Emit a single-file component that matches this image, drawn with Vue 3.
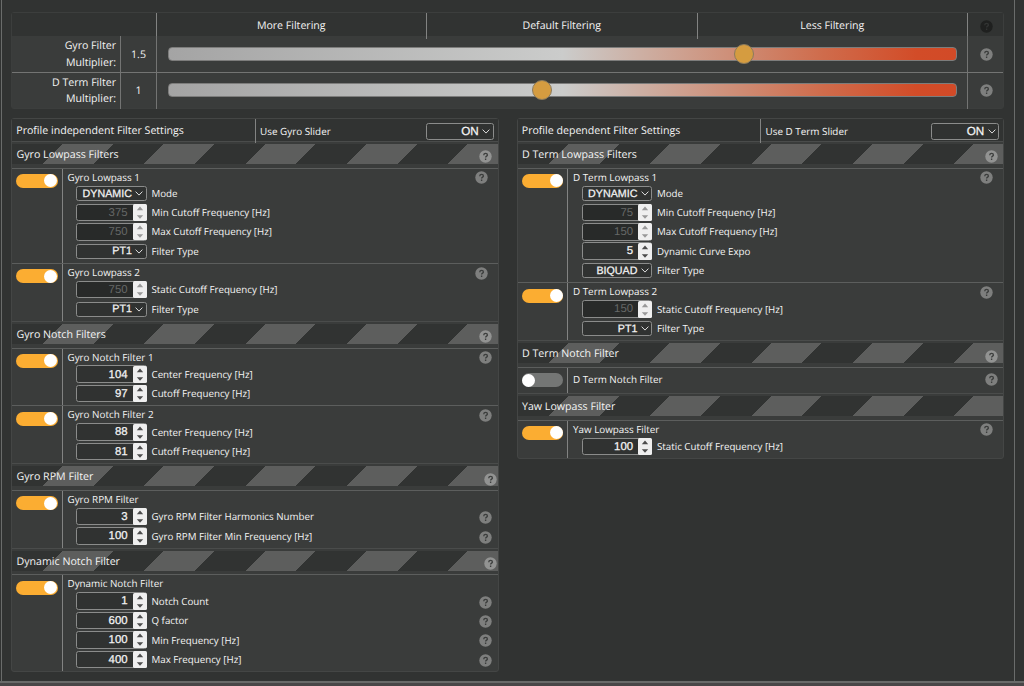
<script setup>
import { h } from 'vue'

const HelpIcon = () =>
  h('svg', { viewBox: '0 0 13 13', class: 'help' }, [
    h('circle', { cx: 6.5, cy: 6.5, r: 6.2, fill: 'currentColor' }),
    h('path', {
      d: 'M4.7 5.2C4.8 3.9 5.6 3.4 6.6 3.4C7.7 3.4 8.4 4 8.4 4.9C8.4 6.1 6.6 6.1 6.6 7.5M6.6 8.6V9.9',
      fill: 'none',
      stroke: '#343635',
      'stroke-opacity': 0.9,
      'stroke-width': 1.35
    })
  ])

const sliders = [
  { label: ['Gyro Filter', 'Multiplier:'], value: '1.5', pos: 73.1 },
  { label: ['D Term Filter', 'Multiplier:'], value: '1', pos: 47.4 }
]

const sel = (value, label, tight = false) => ({ kind: 'select', value, label, tight })
const num = (value, label, opts = {}) => ({ kind: 'number', value, label, ...opts })

const columns = [
  {
    title: 'Profile independent Filter Settings',
    toggle: 'Use Gyro Slider',
    sections: [
      {
        title: 'Gyro Lowpass Filters', help: 'mid',
        groups: [
          { title: 'Gyro Lowpass 1', on: true, help: 'in', rows: [
            sel('DYNAMIC', 'Mode', true),
            num(375, 'Min Cutoff Frequency [Hz]', { off: true }),
            num(750, 'Max Cutoff Frequency [Hz]', { off: true }),
            sel('PT1', 'Filter Type')
          ] },
          { title: 'Gyro Lowpass 2', on: true, help: 'in', rows: [
            num(750, 'Static Cutoff Frequency [Hz]', { off: true }),
            sel('PT1', 'Filter Type')
          ] }
        ]
      },
      {
        title: 'Gyro Notch Filters', help: 'mid',
        groups: [
          { title: 'Gyro Notch Filter 1', on: true, help: 'mid', rows: [
            num(104, 'Center Frequency [Hz]'), num(97, 'Cutoff Frequency [Hz]')
          ] },
          { title: 'Gyro Notch Filter 2', on: true, help: 'mid', rows: [
            num(88, 'Center Frequency [Hz]'), num(81, 'Cutoff Frequency [Hz]')
          ] }
        ]
      },
      {
        title: 'Gyro RPM Filter', help: 'out',
        groups: [
          { title: 'Gyro RPM Filter', on: true, rows: [
            num(3, 'Gyro RPM Filter Harmonics Number', { help: true }),
            num(100, 'Gyro RPM Filter Min Frequency [Hz]', { help: true })
          ] }
        ]
      },
      {
        title: 'Dynamic Notch Filter', help: 'out',
        groups: [
          { title: 'Dynamic Notch Filter', on: true, rows: [
            num(1, 'Notch Count', { help: true }),
            num(600, 'Q factor', { help: true }),
            num(100, 'Min Frequency [Hz]', { help: true }),
            num(400, 'Max Frequency [Hz]', { help: true })
          ] }
        ]
      }
    ]
  },
  {
    title: 'Profile dependent Filter Settings',
    toggle: 'Use D Term Slider',
    sections: [
      {
        title: 'D Term Lowpass Filters', help: 'mid',
        groups: [
          { title: 'D Term Lowpass 1', on: true, help: 'in', rows: [
            sel('DYNAMIC', 'Mode', true),
            num(75, 'Min Cutoff Frequency [Hz]', { off: true }),
            num(150, 'Max Cutoff Frequency [Hz]', { off: true }),
            num(5, 'Dynamic Curve Expo'),
            sel('BIQUAD', 'Filter Type')
          ] },
          { title: 'D Term Lowpass 2', on: true, help: 'in', rows: [
            num(150, 'Static Cutoff Frequency [Hz]', { off: true }),
            sel('PT1', 'Filter Type')
          ] }
        ]
      },
      {
        title: 'D Term Notch Filter', help: 'mid',
        groups: [{ title: 'D Term Notch Filter', on: false, help: 'mid', rows: [] }]
      },
      {
        title: 'Yaw Lowpass Filter',
        groups: [
          { title: 'Yaw Lowpass Filter', on: true, help: 'in', rows: [
            num(100, 'Static Cutoff Frequency [Hz]')
          ] }
        ]
      }
    ]
  }
]
</script>

<template>
  <div class="page">
    <div class="frame">
      <section class="sliders">
        <div class="scale">
          <div class="blank"></div>
          <div>More Filtering</div>
          <div>Default Filtering</div>
          <div>Less Filtering</div>
          <div class="scale-help"><HelpIcon /></div>
        </div>
        <div v-for="s in sliders" :key="s.value" class="slider-row">
          <div class="slider-label"><span v-for="l in s.label" :key="l">{{ l }}</span></div>
          <div class="slider-value">{{ s.value }}</div>
          <div class="slider-cell">
            <div class="track"><i class="thumb" :style="{ left: s.pos + '%' }"></i></div>
          </div>
          <div class="slider-help"><HelpIcon /></div>
        </div>
      </section>

      <div class="columns">
        <section v-for="c in columns" :key="c.title" class="panel">
          <header class="panel-head">
            <div class="panel-title">{{ c.title }}</div>
            <div class="panel-toggle">
              <span>{{ c.toggle }}</span>
              <div class="select wide">
                <span>ON</span>
                <svg class="chev" viewBox="0 0 8 5"><path d="M.6.6 4 4.1 7.4.6" /></svg>
              </div>
            </div>
          </header>
          <template v-for="s in c.sections" :key="s.title">
            <div class="band">
              <div class="stripes">
                <span>{{ s.title }}</span>
                <div v-if="s.help" class="band-help" :class="s.help"><HelpIcon /></div>
              </div>
            </div>
            <div v-for="g in s.groups" :key="g.title" class="group" :class="{ bare: !g.rows.length }">
              <div class="switch-cell"><div class="switch" :class="{ on: g.on }"><i></i></div></div>
              <div class="group-body">
                <div class="group-title">
                  <span>{{ g.title }}</span>
                  <div v-if="g.help" class="group-help" :class="g.help"><HelpIcon /></div>
                </div>
                <div v-for="r in g.rows" :key="r.label" class="row" :class="{ tight: r.tight }">
                  <div v-if="r.kind === 'select'" class="select">
                    <span>{{ r.value }}</span>
                    <svg class="chev" viewBox="0 0 8 5"><path d="M.6.6 4 4.1 7.4.6" /></svg>
                  </div>
                  <div v-else class="number" :class="{ off: r.off }">
                    <span>{{ r.value }}</span>
                    <svg class="spin" viewBox="0 0 14 17">
                      <rect width="14" height="17" rx="1.5" fill="#efefef" />
                      <path d="M3.8 6.2 7 2.6 10.2 6.2ZM3.8 11.2 7 14.8 10.2 11.2Z" />
                    </svg>
                  </div>
                  <span class="row-label">{{ r.label }}</span>
                  <div v-if="r.help" class="row-help"><HelpIcon /></div>
                </div>
              </div>
            </div>
          </template>
        </section>
      </div>
    </div>
    <div class="footer"></div>
  </div>
</template>

<style>
body {
  background: #313332;
}
</style>

<style scoped>
* {
  box-sizing: border-box;
}
.page {
  width: 1024px;
  height: 686px;
  overflow: hidden;
  background: #313332;
  color: #f4f4f4;
  font: 10.6px/16px "Open Sans", sans-serif;
  text-rendering: geometricPrecision;
  display: flex;
  flex-direction: column;
}
.frame {
  height: 681px;
  margin: 0 9px 0 1px;
  border: solid #6a6c6b;
  border-width: 0 1px;
  padding: 12px 8px 0 9px;
}
.footer {
  height: 5px;
  background: #484647;
  border-top: 2px solid #696a69;
}
.help {
  display: block;
  width: 13px;
  height: 13px;
  color: #7e7f7e;
}
.sliders {
  width: 993px;
  height: 96.5px;
  background: #3a3c3b;
  border: 1px solid #3c3e3d;
  border-radius: 3px;
}
.scale {
  height: 23px;
  display: grid;
  grid-template-columns: 143.5px 270.5px 270.5px 270.5px 1fr;
  background: #313332;
  text-align: center;
  line-height: 26px;
}
.scale > div + div {
  border-left: 1px solid #828382;
}
.scale-help {
  display: flex;
  justify-content: center;
  align-items: center;
  padding: 0 0 0 2px;
}
.scale-help .help {
  color: #1f201f;
}
.slider-row {
  height: 36px;
  display: grid;
  grid-template-columns: 108px 36px 811px 1fr;
  align-items: stretch;
}
.slider-row + .slider-row {
  border-top: 1px solid #737473;
}
.slider-row > div + div {
  border-left: 1px solid #737473;
}
.slider-label {
  display: flex;
  flex-direction: column;
  align-items: flex-end;
  line-height: 16.8px;
  padding: 2px 4px 0 0;
}
.slider-value {
  text-align: center;
  line-height: 38px;
}
.slider-row + .slider-row .slider-label {
  padding-top: 1.5px;
}
.slider-row + .slider-row .slider-value {
  line-height: 36px;
}
.slider-cell {
  padding: 11px 10.5px 0 10.5px;
}
.slider-row + .slider-row .slider-cell {
  padding-top: 10px;
}
.slider-help {
  display: flex;
  align-items: center;
  justify-content: center;
  padding: 0 0 1px 2px;
}
.track {
  position: relative;
  height: 14px;
  border: 1px solid #7d7d7c;
  border-radius: 4px;
  background: linear-gradient(90deg, #a4a4a4 0%, #cbcccb 50%, #cdafa3 60%, #ce8a72 73%, #cf6c4c 83%, #d24c28 95%, #d24a27 100%);
}
.thumb {
  position: absolute;
  top: -4px;
  width: 20px;
  height: 20px;
  margin-left: -10px;
  border-radius: 50%;
  background: #d59c40;
  border: 1px solid #8b7b5d;
}
.columns {
  display: grid;
  grid-template-columns: 487.5px 487.5px;
  gap: 18px;
  align-items: start;
  margin-top: 9.5px;
}
.panel {
  background: #3a3c3b;
  border: 1px solid #444645;
  border-radius: 3px;
}
.panel-head {
  height: 22px;
  display: grid;
  grid-template-columns: 242.5px 1fr;
  background: #313332;
  line-height: 24px;
}
.panel-title {
  padding-left: 4.3px;
}
.panel-toggle {
  border-left: 1px solid #828382;
  padding: 0 4px 0 4.5px;
  display: flex;
  justify-content: space-between;
  align-items: center;
  font-size: 9.9px;
  line-height: 22px;
}
.select,
.number {
  width: 70.5px;
  border: 1px solid #8b8c8b;
  border-radius: 2.5px;
  background: #303231;
  font: 11.4px/13px "Liberation Sans", Arial, sans-serif;
  -webkit-text-stroke: 0.25px currentColor;
  display: flex;
  justify-content: flex-end;
  align-items: center;
  flex: none;
}
.select {
  height: 15px;
  padding-right: 2.5px;
  font-size: 10.7px;
}
.select span,
.number span {
  padding-top: 1.6px;
}
.wide {
  width: 68px;
  height: 17px;
  font-size: 11.7px;
}
.wide span {
  padding-top: 0;
}
.chev {
  flex: none;
  width: 8px;
  height: 5px;
  margin-left: 3.2px;
  fill: none;
  stroke: #ddd;
  stroke-width: 1;
}
.number {
  height: 17.5px;
}
.spin {
  flex: none;
  width: 14px;
  height: 17px;
  margin: -1px -1px -1px 5px;
  fill: #4c4c4c;
}
.number.off {
  background: #282a29;
  color: #666867;
  -webkit-text-stroke: 0;
}
.off .spin {
  fill: #999;
}
.band {
  height: 26.5px;
  padding-top: 1.7px;
  border-top: 1px solid #4a4c4b;
}
.stripes {
  position: relative;
  height: 20.3px;
  padding-left: 4.5px;
  line-height: 22.4px;
  font-size: 10.65px;
  background: repeating-linear-gradient(135deg, #313332 0, #313332 35.8px, #5d5e5d 35.8px, #5d5e5d 71.6px);
}
.band-help {
  position: absolute;
  top: 6.5px;
}
.band-help .help {
  color: #929392;
}
.band-help.mid {
  right: 5.4px;
}
.band-help.out {
  right: 0.8px;
}
.group {
  display: grid;
  grid-template-columns: 50.5px 1fr;
  border-top: 1px solid #5c5e5d;
}
.switch-cell {
  border-right: 1px solid #828382;
  padding: 5.3px 0 0 4.3px;
}
.switch {
  width: 41.5px;
  height: 14px;
  padding-top: 0.5px;
  border-radius: 7px;
  background: #747675;
}
.switch i {
  display: block;
  width: 13px;
  height: 13px;
  margin-left: 0.5px;
  border-radius: 50%;
  background: #fff;
}
.switch.on {
  background: #fbad32;
}
.switch.on i {
  margin-left: 28px;
}
.group-body {
  padding: 0 0 2.2px 5px;
}
.group-title {
  position: relative;
  height: 16px;
  line-height: 17px;
  font-size: 9.85px;
}
.bare .group-title {
  height: 23px;
  line-height: 23px;
}
.group-help {
  position: absolute;
  top: 2.6px;
}
.bare .group-help {
  top: 5.5px;
}
.group-help.in {
  right: 9.7px;
}
.group-help.mid {
  right: 5.4px;
}
.row {
  height: 19.4px;
  display: flex;
  align-items: center;
  padding-left: 8.6px;
  font-size: 9.75px;
}
.row.tight {
  height: 18.2px;
}
.row-label {
  margin-left: 4.9px;
  padding-top: 1.4px;
}
.row-help {
  margin: 2px 5.4px 0 auto;
}
</style>
